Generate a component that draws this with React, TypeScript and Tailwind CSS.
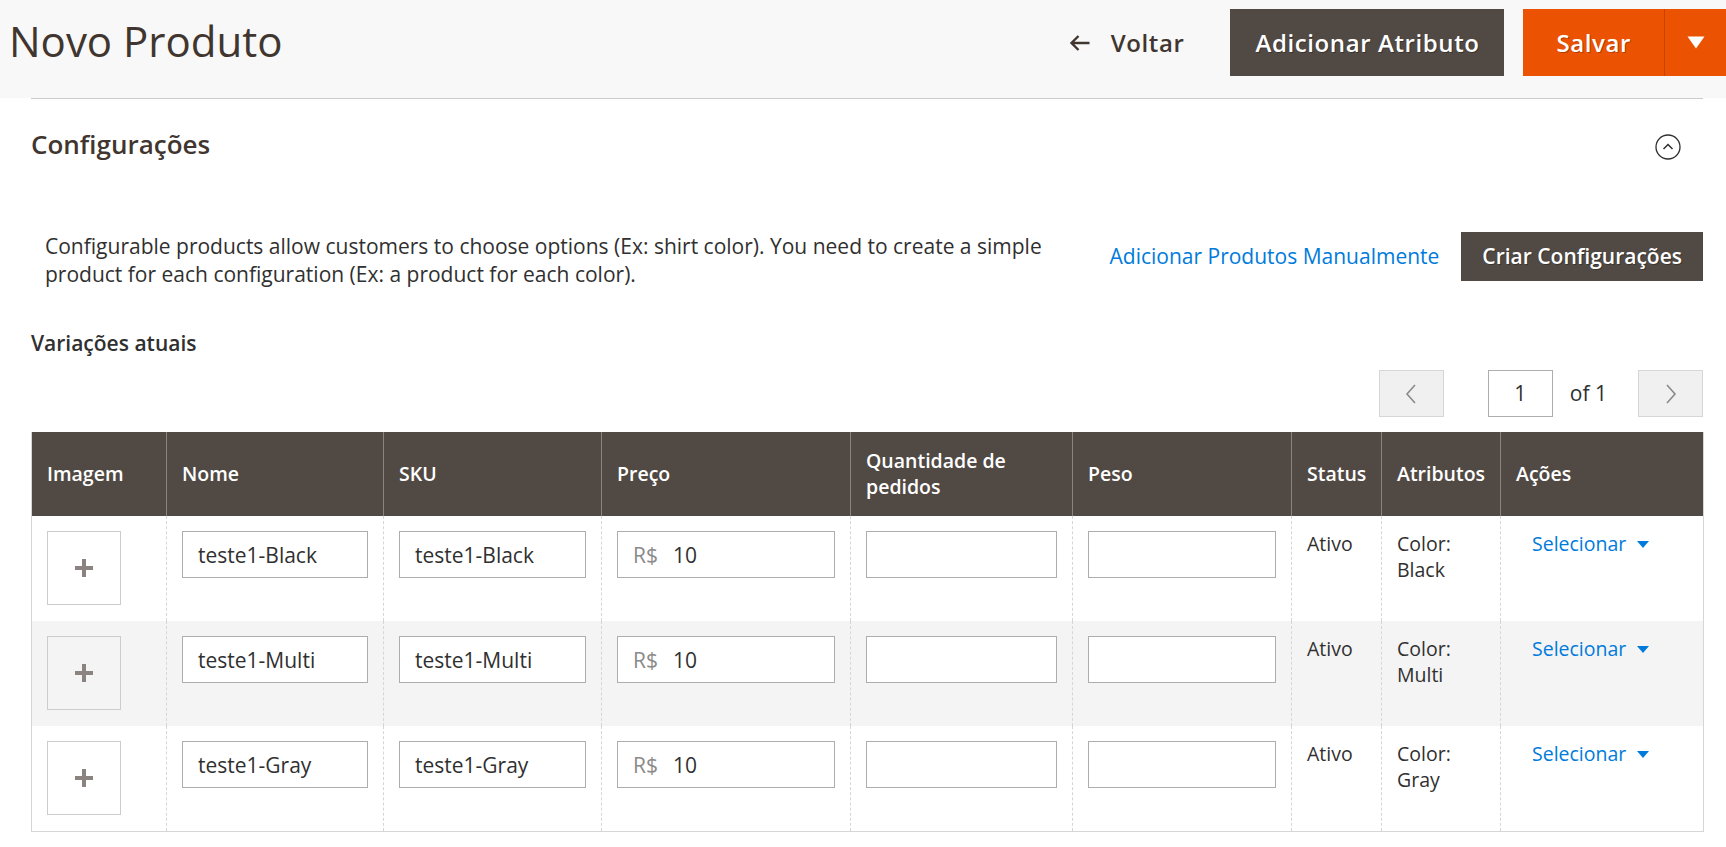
import { ReactNode } from 'react';

interface Variation {
  name: string;
  sku: string;
  price: string;
  color: string;
}

const variations: Variation[] = [
  { name: 'teste1-Black', sku: 'teste1-Black', price: '10', color: 'Black' },
  { name: 'teste1-Multi', sku: 'teste1-Multi', price: '10', color: 'Multi' },
  { name: 'teste1-Gray', sku: 'teste1-Gray', price: '10', color: 'Gray' },
];

const columns = [
  { label: 'Imagem', width: 'w-[135px]' },
  { label: 'Nome', width: 'w-[217px]' },
  { label: 'SKU', width: 'w-[218px]' },
  { label: 'Preço', width: 'w-[249px]' },
  { label: 'Quantidade de pedidos', width: 'w-[222px]' },
  { label: 'Peso', width: 'w-[219px]' },
  { label: 'Status', width: 'w-[90px]' },
  { label: 'Atributos', width: 'w-[119px]' },
  { label: 'Ações', width: 'w-[203px]' },
];

function Field({ children }: { children?: ReactNode }) {
  return (
    <div className="flex h-[47px] w-full items-center border border-[#adadad] bg-white px-[15px] text-[21px] text-[#303030]">
      {children}
    </div>
  );
}

function Cell({ children, first }: { children?: ReactNode; first?: boolean }) {
  return (
    <td
      className={`px-[15px] pt-[15px] pb-[16px] align-top leading-[26px] ${
        first ? '' : 'border-l border-dashed border-[#d6d6d6]'
      }`}
    >
      {children}
    </td>
  );
}

export default function App() {
  return (
    <div className="min-h-screen bg-white font-['Open_Sans',sans-serif] text-[#303030]">
      <header className="flex h-[98px] items-start justify-between bg-[#f8f8f8] pt-[9px] pl-[9px]">
        <h1 className="text-[42px] leading-[63px] font-normal text-[#41362f]">Novo Produto</h1>
        <div className="flex items-center">
          <button className="flex items-center gap-[21px] text-[24px] font-semibold tracking-[0.025em] text-[#41362f]">
            <svg width="21" height="18" viewBox="0 0 21 18" fill="none" stroke="#41362f" strokeWidth="2.4">
              <path d="M20.5 9H2.5M9.5 2L2.5 9l7 7" />
            </svg>
            Voltar
          </button>
          <button className="ml-[46px] h-[67px] bg-[#514943] px-[25px] text-[24px] font-semibold tracking-[0.025em] text-white [text-shadow:1px_1px_0_rgba(0,0,0,0.3)]">
            Adicionar Atributo
          </button>
          <div className="ml-[19px] flex h-[67px] bg-[#eb5202]">
            <button className="px-[33px] text-[24px] font-semibold tracking-[0.025em] text-white [text-shadow:1px_1px_0_rgba(0,0,0,0.25)]">
              Salvar
            </button>
            <div className="w-px bg-[#c64400]" />
            <button className="flex w-[61px] items-center justify-center">
              <svg width="18" height="13" viewBox="0 0 18 13">
                <path d="M0.5 0.5h17L9 12.5z" fill="white" />
              </svg>
            </button>
          </div>
        </div>
      </header>

      <div className="pl-[31px] pr-[23px]">
        <section className="border-t border-[#cccccc]">
          <div className="flex items-start justify-between pt-[30px] pr-[22px]">
            <h2 className="text-[26px] leading-[30px] font-semibold text-[#41362f]">Configurações</h2>
            <svg className="mt-[5px]" width="26" height="26" viewBox="0 0 26 26" fill="none" stroke="#303030">
              <circle cx="13" cy="13" r="12" strokeWidth="1.3" />
              <path d="M8.5 15L13 10.5L17.5 15" strokeWidth="1.5" />
            </svg>
          </div>

          <div className="mt-[72px] flex items-start justify-between">
            <p className="pl-[14px] text-[21px] leading-[28px] whitespace-nowrap text-[#303030]">
              Configurable products allow customers to choose options (Ex: shirt color). You need to create a simple
              <br />
              product for each configuration (Ex: a product for each color).
            </p>
            <div className="flex items-center">
              <a className="text-[21px] text-[#007bdb]">Adicionar Produtos Manualmente</a>
              <button className="ml-[22px] h-[49px] bg-[#514943] px-[21px] text-[21px] font-semibold text-white [text-shadow:1px_1px_0_rgba(0,0,0,0.3)]">
                Criar Configurações
              </button>
            </div>
          </div>

          <h3 className="mt-[41px] text-[21px] leading-[28px] font-semibold text-[#303030]">Variações atuais</h3>

          <div className="mt-[13px] flex h-[47px] items-center justify-end">
            <button className="flex h-[47px] w-[65px] items-center justify-center border border-[#d6d6d6] bg-[#f0f0f0]">
              <svg width="12" height="20" viewBox="0 0 12 20" fill="none" stroke="#8a8a8a" strokeWidth="1.6">
                <path d="M10 1L2 10l8 9" />
              </svg>
            </button>
            <div className="ml-[44px] flex h-[47px] w-[65px] items-center justify-center border border-[#adadad] bg-white text-[21px]">
              1
            </div>
            <span className="ml-[17px] text-[21px]">of 1</span>
            <button className="ml-[31px] flex h-[47px] w-[65px] items-center justify-center border border-[#d6d6d6] bg-[#f0f0f0]">
              <svg width="12" height="20" viewBox="0 0 12 20" fill="none" stroke="#8a8a8a" strokeWidth="1.6">
                <path d="M2 1l8 9-8 9" />
              </svg>
            </button>
          </div>

          <table className="mt-[15px] w-[1672px] table-fixed border-collapse border-x border-b border-[#d6d6d6]">
            <colgroup>
              {columns.map((c) => (
                <col key={c.label} className={c.width} />
              ))}
            </colgroup>
            <thead>
              <tr className="bg-[#514943]">
                {columns.map((c, i) => (
                  <th
                    key={c.label}
                    className={`px-[15px] py-[16px] text-left align-middle text-[19.5px] leading-[26px] font-semibold text-white ${
                      i === 0 ? '' : 'border-l border-[#8a837f]'
                    }`}
                  >
                    {c.label}
                  </th>
                ))}
              </tr>
            </thead>
            <tbody>
              {variations.map((v, i) => (
                <tr key={v.sku} className={i === 1 ? 'bg-[#f4f4f4]' : 'bg-white'}>
                  <Cell first>
                    <div className="flex h-[74px] w-[74px] items-center justify-center border border-[#cccccc]">
                      <svg width="18" height="18" viewBox="0 0 18 18" fill="#8a837f">
                        <rect x="7" y="0" width="4" height="18" />
                        <rect x="0" y="7" width="18" height="4" />
                      </svg>
                    </div>
                  </Cell>
                  <Cell>
                    <Field>{v.name}</Field>
                  </Cell>
                  <Cell>
                    <Field>{v.sku}</Field>
                  </Cell>
                  <Cell>
                    <Field>
                      <span className="text-[#8a8a8a]">R$</span>
                      <span className="ml-[15px]">{v.price}</span>
                    </Field>
                  </Cell>
                  <Cell>
                    <Field />
                  </Cell>
                  <Cell>
                    <Field />
                  </Cell>
                  <Cell>
                    <span className="text-[19.5px]">Ativo</span>
                  </Cell>
                  <Cell>
                    <div className="text-[19.5px]">
                      Color:
                      <br />
                      {v.color}
                    </div>
                  </Cell>
                  <Cell>
                    <button className="flex items-center gap-[11px] pl-[16px] text-[19.5px] leading-[26px] text-[#007bdb]">
                      Selecionar
                      <svg width="12" height="7" viewBox="0 0 12 7">
                        <path d="M0 0h12L6 7z" fill="#007bdb" />
                      </svg>
                    </button>
                  </Cell>
                </tr>
              ))}
            </tbody>
          </table>
        </section>
      </div>
    </div>
  );
}
